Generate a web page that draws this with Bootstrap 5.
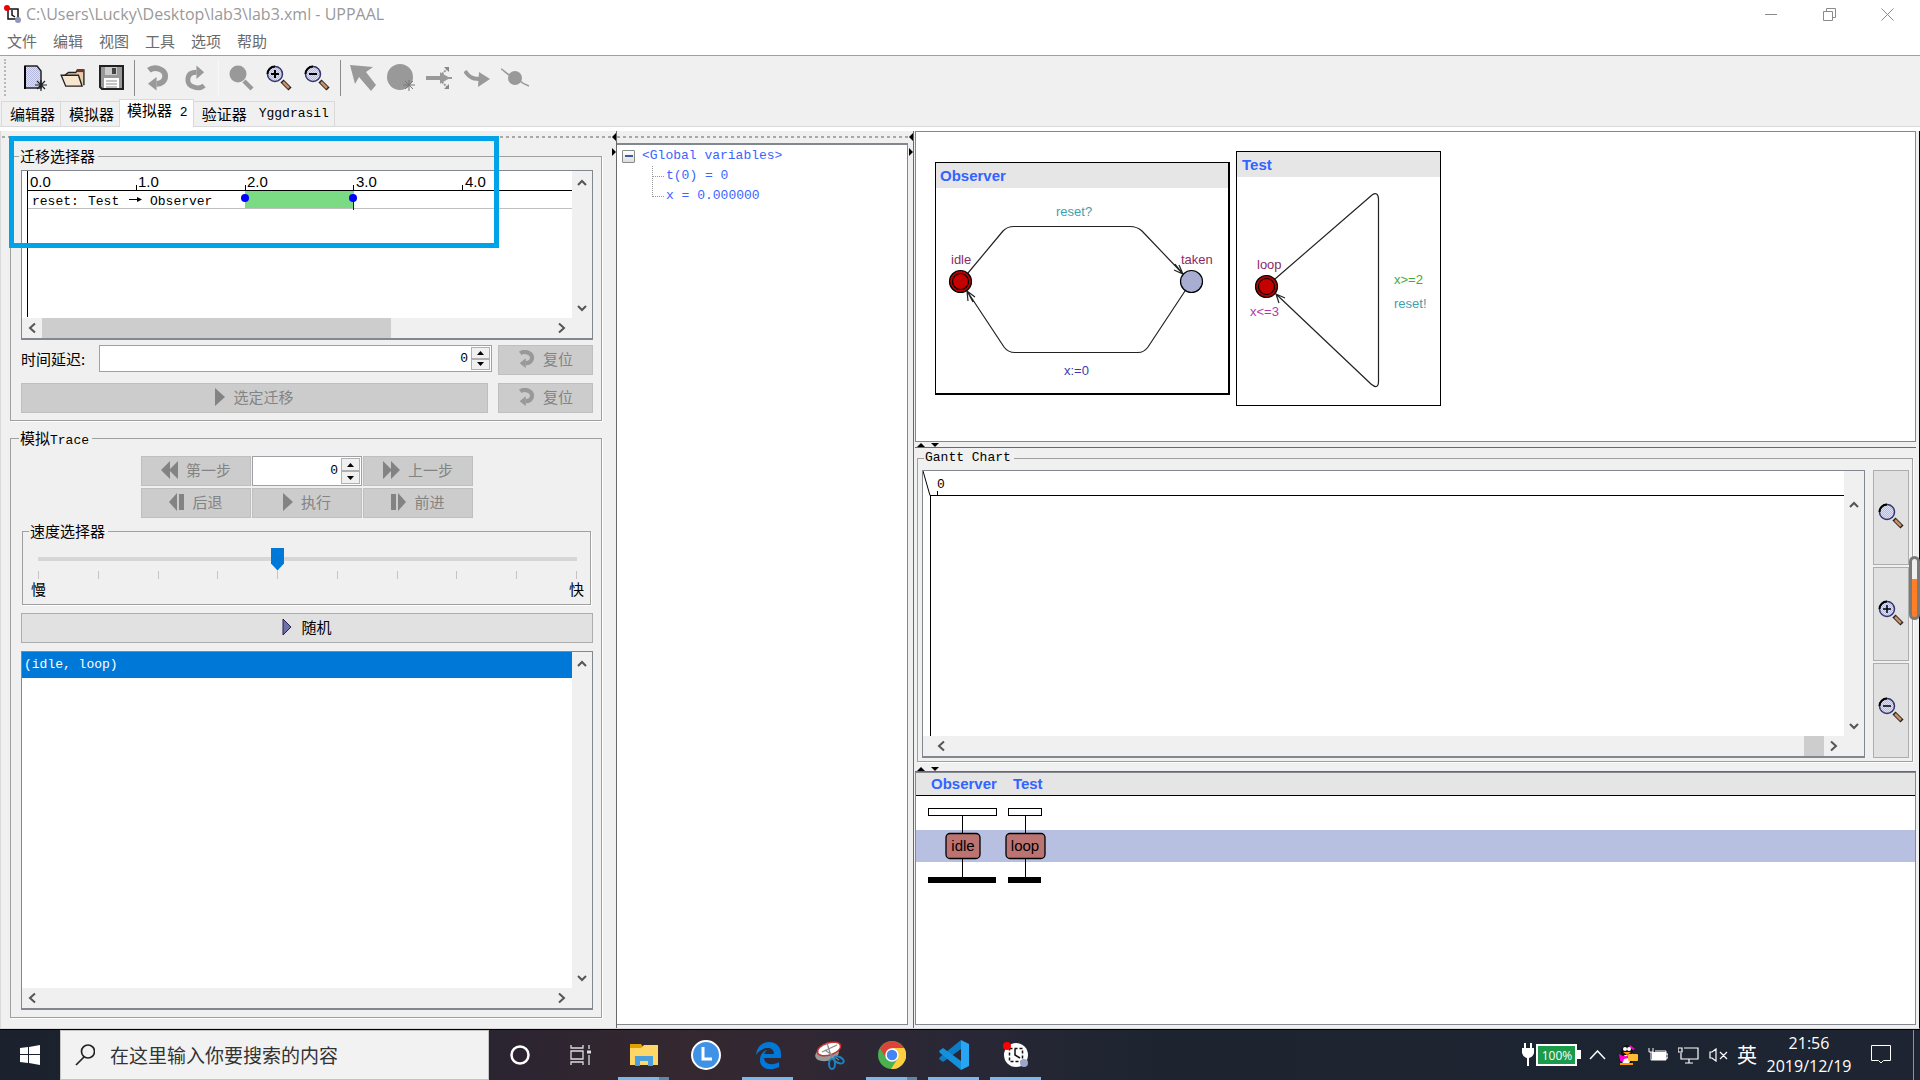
<!DOCTYPE html>
<html lang="zh-CN">
<head>
<meta charset="utf-8">
<meta name="viewport" content="width=device-width, initial-scale=1">
<title>UPPAAL</title>
<link rel="stylesheet" href="https://cdn.jsdelivr.net/npm/bootstrap@5.3.0/dist/css/bootstrap.min.css">
<style>
  body { background:#f0f0f0; color:#000; font-family:"Liberation Sans","Noto Sans CJK SC",sans-serif; font-size:15px; line-height:20px; overflow:hidden; }
  button { color:inherit; }
  svg { display:block; flex:none; }
  .song { font-family:"Noto Sans CJK SC",sans-serif; font-size:15px; line-height:20px; }
  .fixw { font-family:"Liberation Mono","Noto Sans CJK SC",monospace; font-size:13px; line-height:20px; white-space:pre; }
  .plain-btn { border:0; background:none; padding:0; display:flex; align-items:center; justify-content:center; }

  .title-bar { height:28px; background:#fff; color:#999; font-family:"Open Sans",sans-serif; font-size:16px; }
  .win-btn { width:58px; height:28px; color:#8a8a8a; }
  .menu-bar { height:28px; background:#fff; border-bottom:1px solid #a0a0a0; padding:0 7px; gap:16px; }
  .menu-bar a { color:#6a6a6a; text-decoration:none; line-height:26px; }
  .tool-bar { height:43px; padding-left:16px; position:relative; }
  .grip { position:absolute; left:4px; top:3px; height:37px; border-left:2px dotted #b8b8b8; }
  .tool-btn { width:38px; height:42px; }
  .tool-sep { width:8px; height:36px; display:flex; justify-content:center; }
  .tool-sep::after { content:""; width:1px; background:#8c8c8c; }
  .tool-sep.pale::after { background:#f8f8f8; }

  .tabs { height:28px; padding-left:2px; border-bottom:1px solid #d9d9d9; }
  .tabs .tab-btn { height:25px; border:1px solid #d9d9d9; border-bottom:0; margin-left:-1px; background:#f0f0f0; padding:0 5px 0 8px; white-space:pre; }
  .tabs .tab-btn.on { height:28px; background:#fff; margin-bottom:-1px; padding:0 5px 4px 7px; }
  .tab-gap { height:4px; background:#fff; }
  .work { border-left:1px solid #d9d9d9; border-right:1px solid #000; border-bottom:1px solid #d9d9d9; min-height:0; }

  .left-pane { width:611px; padding:0 10px 10px 9px; position:relative; }
  .drag { height:12px; background:repeating-linear-gradient(90deg,#a8a8a8 0 3px,transparent 3px 6px) 0 5px/100% 2px no-repeat; }
  .left-pane .drag { margin:0 -10px 3px -8px; }
  .splitter { width:5px; position:relative; border-right:1px solid #696969; background:#f0f0f0; }
  .splitter.wide { width:6px; margin-right:1px; }
  .splitter svg { position:absolute; left:0; top:1px; }
  .wide svg { left:1px; }
  fieldset { border:1px solid #a0a0a0; box-shadow:1px 1px 0 #fff; padding:0 8px 7px 10px; }
  legend { float:none; width:auto; margin:0 0 0 -2px; padding:0 3px 0 1px; height:20px; }
  .annot { position:absolute; left:8px; top:5px; width:490px; height:112px; border:5px solid #00a2e8; pointer-events:none; }

  .sunken { border:1px solid #828790; border-bottom-width:2px; background:#fff; }
  .vbar { width:20px; background:#f0f0f0; padding:2px 0 0; }
  .hbar { height:20px; background:#f0f0f0; padding-right:20px; }
  .bar-btn { width:20px; height:20px; color:#555; }
  .thumb { background:#cdcdcd; height:20px; }
  .grey-btn { background:#ccc; border:1px solid #bfbfbf; color:#838383; display:flex; align-items:center; justify-content:center; gap:8px; padding:0 0 2px; height:30px; }
  .live-btn { background:#e1e1e1; border:1px solid #adadad; display:flex; align-items:center; justify-content:center; gap:9px; padding:0 0 2px; height:30px; }
  .form-grid { display:grid; grid-template-columns:1fr 95px; column-gap:6px; row-gap:8px; margin-top:5px; }
  .steps { display:grid; grid-template-columns:repeat(3,110px); gap:2px 1px; justify-content:center; padding-top:8px; }
  .spin { border:1px solid #a0a0a6; background:#fff; padding:1px; height:27px; min-width:0; }
  .spin input { border:0; outline:0; flex:1; min-width:0; text-align:right; padding:0 3px 0 0; background:#fff; font-family:"Liberation Mono",monospace; font-size:13px; }
  .spin .up-down { width:19px; }
  .spin .up-down button { flex:1; border:1px solid #b0b0b0; background:#f0f0f0; }
  .timeline { height:147px; padding-left:5px; }
  .timeline > svg { border-left:1px solid #000; }

  .trace-set { margin-top:7px; }
  .speed { margin:3px 2px 0 1px; padding:0 6px 5px 8px; }
  .speed input { appearance:none; -webkit-appearance:none; display:block; width:100%; height:24px; background:linear-gradient(#d6d6d6,#d6d6d6) 7px 10px/calc(100% - 14px) 4px no-repeat; margin:6px 0 0; }
  .speed input::-webkit-slider-thumb { -webkit-appearance:none; width:13px; height:23px; background:#0078d7; clip-path:polygon(0 0,100% 0,100% 70%,50% 100%,0 70%); }
  .tick-row { padding:0 7px; }
  .tick-row i { width:1px; height:8px; background:#c4c4c4; }
  .trace-row { background:#0078d7; color:#fff; height:26px; padding:3px 2px; }

  .tree-pane { width:291px; }
  .tree-box { border:1px solid #828790; border-top-width:2px; background:#fff; margin-bottom:3px; color:#3c64ff; padding:1px 5px; border-left:0; }
  .toggle { width:13px; height:13px; border:1px solid #8a8a8a; border-radius:1px; background:linear-gradient(#fff,#ddd); margin-right:7px; }
  .toggle::after { content:""; width:8px; height:2px; background:#3b5ba9; }
  .tree-kids { position:relative; margin-left:30px; }
  .tree-kids div { padding-left:14px; background:repeating-linear-gradient(90deg,#999 0 1px,transparent 1px 2px) 1px 10px/11px 1px no-repeat; }
  .tree-kids::before { content:""; position:absolute; left:0; top:0; height:31px; border-left:1px dotted #999; }

  .right-pane { min-width:0; padding:0 3px 3px 0; }
  .canvas-box { border:1px solid #828790; background:#fff; overflow:hidden; }
  .hsplit { height:6px; border-bottom:1px solid #696969; padding-left:1px; }
  .gantt { margin:0 3px 0 2px; padding:0 3px 4px 4px; height:314px; }
  .gantt legend { margin-left:2px; }
  .gantt-body { height:288px; margin-top:2px; }
  .gantt-view { min-width:0; }
  .zoom-col { width:36px; gap:2px; margin-left:8px; }
  .zoom-col .live-btn { flex:1; height:auto; }
  .msc-head { height:23px; background:#e5e5e5; border-bottom:1px solid #000; color:#3264ff; padding-left:15px; gap:16px; }
  .side-tab { position:fixed; right:0; top:556px; width:11px; height:64px; border:3px solid #7a7a7a; border-radius:6px; background:linear-gradient(#f0f0f0 34%,#ff7f27 34%); }

  .task-bar { height:51px; border-top:1px solid #000; background:linear-gradient(90deg,#1b212d 0,#1d222e 8%,#2b2431 26%,#352830 36%,#292736 50%,#1d2430 60%,#1e2432 100%); color:#fff; }
  .search { width:429px; background:#f2f2f2; border:1px solid #c4c4c4; padding-left:14px; gap:15px; }
  .search input { border:0; background:none; outline:0; flex:1; font-family:"Noto Sans CJK SC",sans-serif; font-size:19px; color:#333; padding:0; }
  .search input::placeholder { color:#333; opacity:1; }
  .app-btn { width:62px; height:50px; position:relative; }
  .app-btn.run::after { content:""; position:absolute; left:5px; right:6px; bottom:0; height:3px; background:#76b9ed; }
  .app-btn.many::before { content:""; position:absolute; right:6px; width:10px; bottom:0; height:3px; background:#5a87ae; z-index:1; }
  .tray { padding-right:6px; }
  .tray-btn { width:30px; height:50px; }
  .ime { width:28px; font-size:20px; }
  .clock { width:96px; font-family:"Open Sans",sans-serif; font-size:16px; line-height:23px; text-align:center; }
</style>
<script src="https://cdn.jsdelivr.net/npm/bootstrap@5.3.0/dist/js/bootstrap.bundle.min.js"></script>
</head>
<body class="d-flex flex-column vh-100">

<svg width="0" height="0" class="position-absolute" aria-hidden="true">
  <defs>
    <pattern id="dots" width="2" height="2" patternUnits="userSpaceOnUse"><rect width="2" height="2" fill="#dfe2f6"/><rect width="1" height="1" fill="#b4b8dc"/><rect x="1" y="1" width="1" height="1" fill="#b4b8dc"/></pattern>
    <symbol id="up" viewBox="0 0 20 20"><path d="M6 12l4-4 4 4" fill="none" stroke="currentColor" stroke-width="2"/></symbol>
    <symbol id="down" viewBox="0 0 20 20"><path d="M6 8l4 4 4-4" fill="none" stroke="currentColor" stroke-width="2"/></symbol>
    <symbol id="left" viewBox="0 0 20 20"><path d="M13 5.500l-5 4.500 5 4.500" fill="none" stroke="currentColor" stroke-width="2"/></symbol>
    <symbol id="right" viewBox="0 0 20 20"><path d="M7 5.500l5 4.500-5 4.500" fill="none" stroke="currentColor" stroke-width="2"/></symbol>
    <symbol id="lens" viewBox="0 0 26 26"><path d="M16 16l8 8" stroke="#222" stroke-width="4.500"/><path d="M17 17l6 6" stroke="#c98f62" stroke-width="2.500"/><circle cx="9" cy="9" r="7.500" fill="url(#dots)" stroke="#34346e" stroke-width="1.500"/><path d="M1.500 9a7.500 7.500 0 0 1 7.500-7.500" fill="none" stroke="#000" stroke-width="2"/></symbol>
    <symbol id="lens-grey" viewBox="0 0 26 26"><circle cx="10" cy="9" r="8.500" fill="#999"/><path d="M16 16l8 8" stroke="#999" stroke-width="4.500"/></symbol>
    <symbol id="undo" viewBox="0 0 24 26"><path d="M3 5c6-5 17-1 17 6 0 6-5 8-9 8" fill="none" stroke="#999" stroke-width="6"/><path d="M11 12v14l-9-7z" fill="#999"/></symbol>
    <symbol id="redo" viewBox="0 0 24 26"><path d="M21 21c-6 5-17 1-17-6 0-6 4-8 9-8" fill="none" stroke="#999" stroke-width="5"/><path d="M13 0v14l8-7z" fill="#999"/></symbol>
    <symbol id="play" viewBox="0 0 10 18"><path d="M0 0l10 9-10 9z" fill="#838383"/></symbol>
  </defs>
</svg>

<header>
  <div class="title-bar d-flex align-items-center">
    <svg class="ms-1" width="18" height="18" viewBox="0 0 18 18"><path d="M4 4h10v10H4z" fill="#fff" stroke="#111" stroke-width="1.500"/><path d="M8 5v5l3 2" fill="none" stroke="#111" stroke-width="1.500"/><circle cx="3" cy="3" r="3" fill="#e00"/><circle cx="14" cy="15" r="3" fill="#8d97b8"/></svg>
    <span class="flex-grow-1 ps-1">C:\Users\Lucky\Desktop\lab3\lab3.xml - UPPAAL</span>
    <button class="plain-btn win-btn" aria-label="最小化"><svg width="12" height="12"><path d="M0 6.500h12" stroke="currentColor"/></svg></button>
    <button class="plain-btn win-btn" aria-label="还原"><svg width="13" height="13" fill="none" stroke="currentColor"><path d="M.5 3.500h9v9h-9zM3.500 3V.5h9v9H10"/></svg></button>
    <button class="plain-btn win-btn me-1" aria-label="关闭"><svg width="13" height="13"><path d="M.5.5l12 12M12.500.5l-12 12" stroke="currentColor"/></svg></button>
  </div>
  <nav class="menu-bar song d-flex">
    <a href="#">文件</a><a href="#">编辑</a><a href="#">视图</a><a href="#">工具</a><a href="#">选项</a><a href="#">帮助</a>
  </nav>
  <div class="tool-bar d-flex align-items-center" role="toolbar">
    <span class="grip"></span>
    <button class="plain-btn tool-btn" aria-label="新建"><svg width="24" height="26" viewBox="0 0 24 26"><path d="M2 1h12l4 5v17H2z" fill="url(#dots)" stroke="#222" stroke-width="1.500"/><path d="M2 1v23" stroke="#000" stroke-width="2"/><path d="M18 15v11M12 20h12M14 16l8 8M22 16l-8 8" stroke="#222" stroke-width="1.200"/></svg></button>
    <button class="plain-btn tool-btn" aria-label="打开"><svg width="26" height="20" viewBox="0 0 28 22"><path d="M5 8l4-3h8l2-3h7v17" fill="#e9cda9" stroke="#222" stroke-width="1.500"/><path d="M18 3h8" stroke="#7c2f2f" stroke-width="3"/><path d="M1 8h19l4 12H6z" fill="#f7e6cf" stroke="#222" stroke-width="1.500"/></svg></button>
    <button class="plain-btn tool-btn" aria-label="保存"><svg width="25" height="25" viewBox="0 0 25 25"><path d="M1 1h23v23H3l-2-2z" fill="#999" stroke="#222" stroke-width="2"/><path d="M6 2h12v8H6z" fill="#ccc"/><path d="M13 3h4v6h-4z" fill="#444"/><path d="M5 13h15v10H5z" fill="#fff"/><path d="M7 16h11M7 19h11M7 22h11" stroke="#888"/></svg></button>
    <span class="tool-sep"></span>
    <button class="plain-btn tool-btn" aria-label="撤销"><svg width="23" height="26"><use href="#undo"/></svg></button>
    <button class="plain-btn tool-btn" aria-label="重做"><svg width="23" height="26"><use href="#redo"/></svg></button>
    <span class="tool-sep pale"></span>
    <button class="plain-btn tool-btn" aria-label="适合窗口"><svg width="26" height="26"><use href="#lens-grey"/></svg></button>
    <button class="plain-btn tool-btn" aria-label="放大"><svg width="26" height="26"><use href="#lens"/><path d="M5 9h8M9 5v8" stroke="#000" stroke-width="2"/></svg></button>
    <button class="plain-btn tool-btn" aria-label="缩小"><svg width="26" height="26"><use href="#lens"/><path d="M5 9h8" stroke="#000" stroke-width="2"/></svg></button>
    <span class="tool-sep"></span>
    <button class="plain-btn tool-btn" aria-label="选择"><svg width="27" height="26"><path d="M0 0l23 2-7 5 10 13-5 6L9 12l-4 7z" fill="#999"/></svg></button>
    <button class="plain-btn tool-btn" aria-label="添加位置"><svg width="28" height="27"><circle cx="13" cy="13" r="13" fill="#999"/><path d="M22 16v11M16 21h12M18 17l8 8M26 17l-8 8" stroke="#777"/></svg></button>
    <button class="plain-btn tool-btn" aria-label="添加分支"><svg width="27" height="24"><path d="M0 12h15" stroke="#999" stroke-width="4"/><path d="M21 12h5M15 8v8l7-4z" fill="#999" stroke="#999" stroke-width="2"/><path d="M16 8l5-5M16 16l5 5" stroke="#999" stroke-width="2" stroke-dasharray="2 1"/><path d="M18 1h5v5zM18 23h5v-5z" fill="#888"/></svg></button>
    <button class="plain-btn tool-btn" aria-label="添加边"><svg width="26" height="18"><path d="M1 2c5 8 10 8 17 8" fill="none" stroke="#999" stroke-width="4"/><path d="M15 3l11 7-12 8z" fill="#999"/></svg></button>
    <button class="plain-btn tool-btn" aria-label="添加拐点"><svg width="29" height="20"><path d="M0 1c3 1 5 5 9 6l10 6c3 3 6 4 9 5" fill="none" stroke="#999" stroke-width="1.500"/><circle cx="14" cy="10" r="7" fill="#999"/></svg></button>
  </div>
  <div class="tabs song d-flex align-items-end" role="tablist">
    <button class="tab-btn" role="tab">编辑器</button>
    <button class="tab-btn" role="tab">模拟器</button>
    <button class="tab-btn on" role="tab">模拟器<span class="fixw"> 2</span></button>
    <button class="tab-btn border-end-0" role="tab">验证器</button>
    <button class="tab-btn border-start-0 fixw" role="tab">Yggdrasil</button>
  </div>
  <div class="tab-gap"></div>
</header>

<main class="work d-flex flex-grow-1">
  <section class="left-pane d-flex flex-column flex-shrink-0">
    <div class="drag"></div>
    <fieldset>
      <legend class="song">迁移选择器</legend>
      <div class="sunken mt-1 d-flex flex-wrap">
        <div class="timeline flex-grow-1">
          <svg width="100%" height="146" font-family="Liberation Sans" font-size="15">
            <rect x="217" y="20" width="109" height="18" fill="#7adb84"/>
            <path d="M0 19.500h545M108.500 14v5M217.500 14v5M325.500 14v5M434.500 14v5" stroke="#000"/>
            <path d="M0 37.500h545" stroke="#c0c0c0"/>
            <path d="M325.500 28v11" stroke="#00f"/>
            <circle cx="217" cy="27" r="4" fill="#00f"/><circle cx="325" cy="27" r="4" fill="#00f"/>
            <text x="2" y="16">0.0</text><text x="110" y="16">1.0</text><text x="219" y="16">2.0</text><text x="328" y="16">3.0</text><text x="437" y="16">4.0</text>
            <g font-family="Liberation Mono" font-size="13"><text x="4" y="34">reset:</text><text x="60" y="34">Test</text><text x="122" y="34">Observer</text></g>
            <path d="M101 28.500h10" stroke="#000"/><path d="M109 26l5 2.500-5 2.500z"/>
          </svg>
        </div>
        <div class="vbar d-flex flex-column justify-content-between">
          <button class="plain-btn bar-btn" aria-label="向上"><svg width="20" height="20"><use href="#up"/></svg></button>
          <button class="plain-btn bar-btn" aria-label="向下"><svg width="20" height="20"><use href="#down"/></svg></button>
        </div>
        <div class="hbar w-100 d-flex">
          <button class="plain-btn bar-btn" aria-label="向左"><svg width="20" height="20"><use href="#left"/></svg></button>
          <div class="flex-grow-1"><div class="thumb" style="width:68.500%"></div></div>
          <button class="plain-btn bar-btn" aria-label="向右"><svg width="20" height="20"><use href="#right"/></svg></button>
        </div>
      </div>
      <div class="form-grid song">
        <div class="d-flex align-items-start">
          <label for="delay" class="pt-1" style="width:78px">时间延迟:</label>
          <div class="spin d-flex flex-grow-1">
            <input id="delay" type="text" value="0">
            <div class="up-down d-flex flex-column">
              <button class="plain-btn" aria-label="增加"><svg width="7" height="4"><path d="M0 4h7L3.500 0z"/></svg></button>
              <button class="plain-btn" aria-label="减少"><svg width="7" height="4"><path d="M0 0h7L3.500 4z"/></svg></button>
            </div>
          </div>
        </div>
        <button class="grey-btn"><svg width="17" height="18"><use href="#undo"/></svg>复位</button>
        <button class="grey-btn me-1"><svg width="10" height="18"><use href="#play"/></svg>选定迁移</button>
        <button class="grey-btn"><svg width="17" height="18"><use href="#undo"/></svg>复位</button>
      </div>
    </fieldset>

    <fieldset class="trace-set d-flex flex-column flex-grow-1">
      <legend class="song">模拟<span class="fixw">Trace</span></legend>
      <div class="steps song">
        <button class="grey-btn"><svg width="17" height="18"><path d="M9 0v18L0 9zM17 0v18L8 9z" fill="#838383"/></svg>第一步</button>
        <div class="spin d-flex h-100">
          <input id="step" type="text" value="0" aria-label="步">
          <div class="up-down d-flex flex-column">
            <button class="plain-btn" aria-label="增加"><svg width="7" height="4"><path d="M0 4h7L3.500 0z"/></svg></button>
            <button class="plain-btn" aria-label="减少"><svg width="7" height="4"><path d="M0 0h7L3.500 4z"/></svg></button>
          </div>
        </div>
        <button class="grey-btn"><svg width="17" height="18"><path d="M0 0v18l9-9zM8 0v18l9-9z" fill="#838383"/></svg>上一步</button>
        <button class="grey-btn"><svg width="15" height="18"><path d="M8 0v18L0 9zM10 1h5v16h-5z" fill="#838383"/></svg>后退</button>
        <button class="grey-btn"><svg width="10" height="18"><use href="#play"/></svg>执行</button>
        <button class="grey-btn"><svg width="15" height="18"><path d="M0 1h5v16H0zM7 0v18l8-9z" fill="#838383"/></svg>前进</button>
      </div>
      <fieldset class="speed song">
        <legend class="song">速度选择器</legend>
        <input type="range" min="0" max="9" value="4" aria-label="速度">
        <div class="tick-row d-flex justify-content-between"><i></i><i></i><i></i><i></i><i></i><i></i><i></i><i></i><i></i><i></i></div>
        <div class="d-flex justify-content-between"><span>慢</span><span>快</span></div>
      </fieldset>
      <button class="live-btn song mt-2 w-100 flex-shrink-0"><svg width="10" height="18"><path d="M1 1l8 8-8 8z" fill="#6f6fae" stroke="#22224c"/></svg>随机</button>
      <div class="sunken mt-2 flex-grow-1 d-flex flex-column">
        <div class="d-flex flex-grow-1">
          <div class="flex-grow-1"><div class="trace-row fixw">(idle, loop)</div></div>
          <div class="vbar d-flex flex-column justify-content-between">
            <button class="plain-btn bar-btn" aria-label="向上"><svg width="20" height="20"><use href="#up"/></svg></button>
            <button class="plain-btn bar-btn" aria-label="向下"><svg width="20" height="20"><use href="#down"/></svg></button>
          </div>
        </div>
        <div class="hbar d-flex justify-content-between">
          <button class="plain-btn bar-btn" aria-label="向左"><svg width="20" height="20"><use href="#left"/></svg></button>
          <button class="plain-btn bar-btn" aria-label="向右"><svg width="20" height="20"><use href="#right"/></svg></button>
        </div>
      </div>
    </fieldset>
    <div class="annot"></div>
  </section>

  <div class="splitter flex-shrink-0"><svg width="4" height="26"><path d="M4 1v8L0 5zM0 16v8l4-4z"/></svg></div>

  <section class="tree-pane d-flex flex-column flex-shrink-0">
    <div class="drag"></div>
    <div class="tree-box fixw flex-grow-1"><div class="d-flex align-items-center"><span class="plain-btn toggle"></span>&lt;Global variables&gt;</div><div class="tree-kids"><div>t(0) = 0</div><div>x = 0.000000</div></div></div>
  </section>

  <div class="splitter wide flex-shrink-0"><svg width="4" height="26"><path d="M4 1v8L0 5zM0 16v8l4-4z"/></svg></div>

  <section class="right-pane d-flex flex-column flex-grow-1">
    <div class="canvas-box">
      <svg width="100%" height="309" font-family="Liberation Sans" font-size="13">
        <g transform="translate(-916 -132)">
          <rect x="935.500" y="162.500" width="294" height="231" fill="#fff" stroke="#000"/>
          <path d="M1229 162v233M935 394h295" stroke="#000" stroke-width="2"/>
          <rect x="936" y="163" width="292" height="25" fill="#e6e6e6"/>
          <rect x="1236.500" y="151.500" width="204" height="254" fill="#fff" stroke="#000"/>
          <rect x="1237" y="152" width="203" height="25" fill="#e6e6e6"/>
          <g font-size="15" font-weight="bold" fill="#3264ff"><text x="940" y="181">Observer</text><text x="1242" y="170">Test</text></g>
          <g fill="none" stroke="#222" stroke-width="1.200">
            <path d="M968 273L1003 231Q1007 226.500 1014 226.500H1130Q1137 226.500 1142 231L1183 274M1179 265l4 9-9-4M1175 264l8 10"/>
            <path d="M1185 291L1148 347Q1144 352.500 1138 352.500H1015Q1008 352.500 1004 347L967 291M968 301l-1-10 8 6M973 302l-6-11"/>
            <path d="M1275 279L1372 195Q1378 191 1378.500 199V382Q1378 390 1371 384L1276 294M1279 303l-3-9 9 4"/>
          </g>
          <g stroke="#000" stroke-width="1.200">
            <circle cx="960.500" cy="281.500" r="11" fill="#b90000"/><circle cx="960.500" cy="281.500" r="8" fill="#c40000"/>
            <circle cx="1191.500" cy="281.500" r="11" fill="#a7aed1"/>
            <circle cx="1266.500" cy="286.500" r="11" fill="#b90000"/><circle cx="1266.500" cy="286.500" r="8" fill="#c40000"/>
          </g>
          <g fill="#8c2b60"><text x="951" y="264">idle</text><text x="1181" y="264">taken</text><text x="1257" y="269">loop</text></g>
          <g fill="#3f9fae"><text x="1056" y="216">reset?</text><text x="1394" y="308">reset!</text></g>
          <text x="1064" y="375" fill="#3a3ab0">x:=0</text>
          <text x="1250" y="316" fill="#b03ab0">x&lt;=3</text>
          <text x="1394" y="284" fill="#3aae3a">x&gt;=2</text>
        </g>
      </svg>
    </div>
    <div class="hsplit"><svg width="24" height="5"><path d="M1 5h8L5 1zM15 1h8l-4 4z"/></svg></div>
    <fieldset class="gantt">
      <legend class="fixw">Gantt Chart</legend>
      <div class="gantt-body d-flex">
        <div class="sunken gantt-view flex-grow-1 d-flex flex-column">
          <div class="d-flex flex-grow-1">
            <div class="flex-grow-1 overflow-hidden">
              <svg width="100%" height="265" font-family="Liberation Mono" font-size="13"><path d="M0 0l7 24.500h2000M7.500 24v241M14.500 20v4" fill="none" stroke="#000"/><text x="14" y="17">0</text></svg>
            </div>
            <div class="vbar pt-4 d-flex flex-column justify-content-between">
              <button class="plain-btn bar-btn" aria-label="向上"><svg width="20" height="20"><use href="#up"/></svg></button>
              <button class="plain-btn bar-btn" aria-label="向下"><svg width="20" height="20"><use href="#down"/></svg></button>
            </div>
          </div>
          <div class="hbar ps-2 d-flex">
            <button class="plain-btn bar-btn" aria-label="向左"><svg width="20" height="20"><use href="#left"/></svg></button>
            <div class="flex-grow-1 d-flex justify-content-end"><div class="thumb" style="width:20px"></div></div>
            <button class="plain-btn bar-btn" aria-label="向右"><svg width="20" height="20"><use href="#right"/></svg></button>
          </div>
        </div>
        <div class="zoom-col d-flex flex-column">
          <button class="live-btn" aria-label="适合窗口"><svg width="26" height="26"><use href="#lens"/></svg></button>
          <button class="live-btn" aria-label="放大"><svg width="26" height="26"><use href="#lens"/><path d="M5 9h8M9 5v8" stroke="#000" stroke-width="1.500"/></svg></button>
          <button class="live-btn" aria-label="缩小"><svg width="26" height="26"><use href="#lens"/><path d="M5 9h8" stroke="#000" stroke-width="1.500"/></svg></button>
        </div>
      </div>
    </fieldset>
    <div class="hsplit mt-1"><svg width="24" height="5"><path d="M1 5h8L5 1zM15 1h8l-4 4z"/></svg></div>
    <div class="canvas-box flex-grow-1">
      <div class="msc-head d-flex align-items-center fw-bold"><span>Observer</span><span>Test</span></div>
      <svg width="100%" height="120" font-family="Liberation Sans" font-size="15">
        <rect y="34" width="100%" height="32" fill="#b8c0e2"/>
        <path d="M46.500 19v64M109.500 19v64" stroke="#000"/>
        <g fill="#fff" stroke="#000"><rect x="12.500" y="12.500" width="68" height="7"/><rect x="92.500" y="12.500" width="33" height="7"/></g>
        <path d="M12 81h68v6H12zM92 81h33v6H92z"/>
        <g fill="#bc7472" stroke="#000" stroke-width="1.300"><rect x="30" y="37.500" width="34" height="25" rx="4"/><rect x="90" y="37.500" width="39" height="25" rx="4"/></g>
        <text x="47" y="55" text-anchor="middle">idle</text><text x="109" y="55" text-anchor="middle">loop</text>
      </svg>
    </div>
  </section>
  <div class="side-tab"></div>
</main>

<footer class="task-bar d-flex flex-shrink-0">
  <button class="plain-btn" style="width:60px" aria-label="开始"><svg width="20" height="20"><path d="M0 3l8-1v7H0zM9 2l11-2v9H9zM0 10h8v8l-8-1zM9 10h11v10L9 18z" fill="#fff"/></svg></button>
  <div class="search d-flex align-items-center">
    <svg width="20" height="22" fill="none" stroke="#222" stroke-width="1.700"><circle cx="13" cy="7.500" r="6.500"/><path d="M9 13l-8 8"/></svg>
    <input type="text" placeholder="在这里输入你要搜索的内容" aria-label="搜索">
  </div>
  <button class="plain-btn app-btn" aria-label="Cortana"><svg width="20" height="20"><circle cx="10" cy="10" r="8.500" fill="none" stroke="#fff" stroke-width="2.500"/></svg></button>
  <button class="plain-btn app-btn pe-1" aria-label="任务视图"><svg width="21" height="20" fill="none" stroke="#ddd" stroke-width="1.300"><path d="M1 0v3h12V0M1 6h12v8H1zM1 20v-3h12v3M19 0v4M19 10v10"/><path d="M17 7h4" stroke-width="3"/></svg></button>
  <button class="plain-btn app-btn run many" aria-label="文件资源管理器"><svg width="28" height="24"><path d="M0 1h11l2 3v5H0z" fill="#e0a200"/><path d="M0 5h11l3-3h14v20H0z" fill="#ffd767"/><path d="M5 23V13h18v10h-5v-5h-8v5z" fill="#4a9fdd"/></svg></button>
  <button class="plain-btn app-btn" aria-label="时钟"><svg width="30" height="30"><circle cx="15" cy="15" r="14" fill="#3f92e6" stroke="#fff" stroke-width="2"/><path d="M12 7v12h9" fill="none" stroke="#fff" stroke-width="3"/></svg></button>
  <button class="plain-btn app-btn run" aria-label="Edge"><svg width="25" height="27"><path d="M0 13C1 4 7 0 13 0c8 0 12 6 12 12v4H8c1 8 11 7 15 4v5C13 30 3 26 4 17c0-4 3-8 7-9-2 2-3 4-3 4h10c0-8-12-8-18 1z" fill="#0078d7"/></svg></button>
  <button class="plain-btn app-btn" aria-label="截图工具"><svg width="30" height="30"><ellipse cx="12" cy="14" rx="12" ry="7" fill="#999" transform="rotate(-12 12 14)"/><ellipse cx="14" cy="9" rx="12" ry="6" fill="#fff" stroke="#c33" stroke-width="1.500" transform="rotate(-18 14 9)"/><path d="M12 3l5 16M10 10l14 10M7 12l15-7" stroke="#888" stroke-width="1.200"/><g fill="none" stroke="#1b83c4" stroke-width="2"><ellipse cx="17" cy="24" rx="3" ry="5"/><ellipse cx="24" cy="20" rx="5" ry="3" transform="rotate(25 24 20)"/></g></svg></button>
  <button class="plain-btn app-btn run many" aria-label="Chrome"><svg width="28" height="28"><circle cx="14" cy="14" r="14" fill="#4caf50"/><path d="M2 7A14 14 0 0 1 26 7H14l-6 10z" fill="#db4437"/><path d="M14 7h12.200A14 14 0 0 1 13 28l7-11z" fill="#ffcd40"/><circle cx="14" cy="14" r="6" fill="#4285f4" stroke="#fff" stroke-width="1.500"/></svg></button>
  <button class="plain-btn app-btn run" aria-label="Visual Studio Code"><svg width="30" height="30"><path d="M22 0v9L4 22l-4-3 1-2z" fill="#0d7cc4"/><path d="M22 30v-9L4 8l-4 3 1 2z" fill="#1590db"/><path d="M22 0l8 4v22l-8 4z" fill="#27a5f3"/></svg></button>
  <button class="plain-btn app-btn run" aria-label="UPPAAL"><svg width="26" height="26"><circle cx="13" cy="13" r="12" fill="#fff"/><path d="M6.500 6.500h13v13h-13z" fill="none" stroke="#111" stroke-width="1.500" stroke-dasharray="3 2"/><path d="M12 7v6l5 3" fill="none" stroke="#111" stroke-width="1.500"/><circle cx="4" cy="4" r="4" fill="#f00"/><circle cx="21" cy="21" r="4" fill="#9ba6cc"/></svg></button>
  <div class="tray ms-auto d-flex align-items-center">
    <button class="plain-btn me-1" aria-label="电池 100%"><svg width="59" height="24" font-family="Open Sans" font-size="12"><path d="M3 0v5M9 0v5" stroke="#fff" stroke-width="2"/><path d="M0 5h12v5q-1 4-5 5v8H5v-8q-4-1-5-5z" fill="#fff"/><rect x="15" y="2" width="39" height="20" fill="#1a9a4a" stroke="#fff" stroke-width="2"/><path d="M55 7h4v9h-4z" fill="#fff"/><text x="35" y="17" text-anchor="middle" fill="#fff">100%</text></svg></button>
    <button class="plain-btn tray-btn" style="width:24px" aria-label="显示隐藏的图标"><svg width="17" height="10"><path d="M1 9l7.500-8L16 9" fill="none" stroke="#fff" stroke-width="1.500"/></svg></button>
    <button class="plain-btn tray-btn ms-1" aria-label="QQ"><svg width="20" height="20"><ellipse cx="9" cy="7" rx="6" ry="7" fill="#111"/><ellipse cx="8" cy="14" rx="7" ry="6" fill="#111"/><ellipse cx="8" cy="15" rx="4" ry="5" fill="#fff"/><path d="M1 9q8 5 14-1v3q-5 3-9 3l-1 3-3-1z" fill="#f0c"/><path d="M12 0l5 4-2 1-4-3z" fill="#f0c"/><circle cx="7" cy="4" r="2" fill="#fff"/><circle cx="11" cy="4" r="2" fill="#fff"/><path d="M5 7h8l-4 3zM2 18h13v2H2z" fill="#f90"/><rect x="10" y="9" width="10" height="7" rx="1" fill="#fb3"/></svg></button>
    <button class="plain-btn tray-btn" aria-label="电源"><svg width="20" height="14"><path d="M4 4h14v8H4z" fill="#fff"/><path d="M18 6h2v4h-2M1 0v4h4V0M3 4v8h15V3H7" fill="none" stroke="#fff"/></svg></button>
    <button class="plain-btn tray-btn" aria-label="网络"><svg width="21" height="17" fill="none" stroke="#fff" stroke-width="1.200"><path d="M6 1h14v11H3V6M0 1h4v4H0zM11 12v4M7 16h8"/></svg></button>
    <button class="plain-btn tray-btn" aria-label="静音"><svg width="19" height="14" fill="none" stroke="#fff" stroke-width="1.200"><path d="M1 4h2l4-3v12l-4-3H1zM11 4l7 7M18 4l-7 7"/></svg></button>
    <button class="plain-btn song ime" aria-label="输入法">英</button>
    <div class="clock">21:56<br>2019/12/19</div>
    <button class="plain-btn app-btn" style="width:48px" aria-label="通知"><svg width="20" height="20"><path d="M.5.500h19v15h-7L10 18l-2.500-2.500h-7z" fill="none" stroke="#fff"/></svg></button>
    <div class="vr ms-2 opacity-50" style="height:50px"></div>
  </div>
</footer>
</body>
</html>
